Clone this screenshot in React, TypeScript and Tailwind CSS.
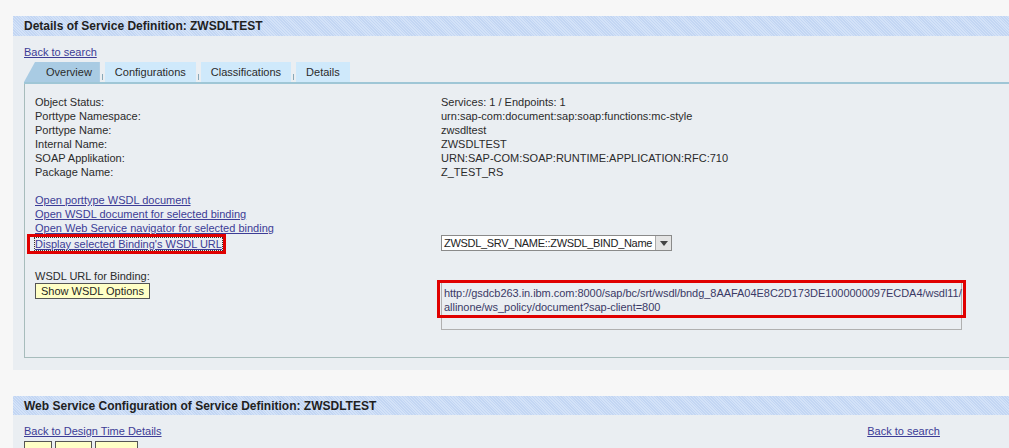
import React from "react";

const rows: [string, string][] = [
  ["Object Status:", "Services: 1 / Endpoints: 1"],
  ["Porttype Namespace:", "urn:sap-com:document:sap:soap:functions:mc-style"],
  ["Porttype Name:", "zwsdltest"],
  ["Internal Name:", "ZWSDLTEST"],
  ["SOAP Applikation:", "URN:SAP-COM:SOAP:RUNTIME:APPLICATION:RFC:710"],
  ["Package Name:", "Z_TEST_RS"],
];

const links = [
  "Open porttype WSDL document",
  "Open WSDL document for selected binding",
  "Open Web Service navigator for selected binding",
];

const hatch =
  "bg-[#cbdcf6] bg-[repeating-linear-gradient(45deg,#c3d6f3_0px,#c3d6f3_1px,#d3e2f8_1px,#d3e2f8_2px)]";

const Tab = ({ label, active, first }: { label: string; active?: boolean; first?: boolean }) => (
  <div className="flex items-end h-[20px]">
    {!first && <div className="w-[1px] h-[6px] bg-[#8aa8b8] mx-[2px] mb-[2px]" />}
    <div
      className={
        active
          ? "h-[20px] pl-[22px] pr-[8px] flex items-center bg-[#a9cbe3] [clip-path:polygon(11px_0,100%_0,100%_100%,0_100%)]"
          : "h-[20px] px-[10px] flex items-center bg-[#cfe9fb]"
      }
    >
      {label}
    </div>
  </div>
);

export default function App() {
  return (
    <div className="w-[1009px] h-[448px] overflow-hidden bg-[#f7f7f7] pt-[16px] pl-[13px] font-['Liberation_Sans',Arial,sans-serif] text-[11px] text-[#2b2b2b] leading-[14px]">
      {/* first panel */}
      <div className="bg-[#eaeef2]">
        <div className={`h-[20px] flex items-center pl-[11px] font-bold text-[12px] text-[#1f1f1f] ${hatch}`}>
          Details of Service Definition: ZWSDLTEST
        </div>
        <div className="pl-[11px] pb-[12px]">
          <div className="pt-[9px] h-[26px]">
            <a className="underline text-[#3c3c96]">Back to search</a>
          </div>
          <div className="flex items-end border-b-2 border-[#9fc6d6]">
            <Tab label="Overview" active first />
            <Tab label="Configurations" />
            <Tab label="Classifications" />
            <Tab label="Details" />
          </div>
          <div className="border-l border-b border-[#a7bcbc] h-[274px] pl-[10px] pt-[11px]">
            {rows.map(([k, v]) => (
              <div key={k} className="flex">
                <div className="w-[406px]">{k}</div>
                <div>{v}</div>
              </div>
            ))}
            <div className="mt-[14px] flex flex-col">
              {links.map((l) => (
                <a key={l} className="underline text-[#3c3c96] w-fit">
                  {l}
                </a>
              ))}
            </div>
            <div className="flex items-start -mt-[1px]">
              <div className="w-[406px]">
                <div className="-ml-[8px] w-[199px] h-[20px] border-[3px] border-[#e00000] flex items-center pl-[5px]">
                  <a className="underline text-[#3c3c96] whitespace-nowrap outline outline-1 outline-dotted outline-[#333] leading-[12px]">
                    Display selected Binding's WSDL URL
                  </a>
                </div>
              </div>
              <div className="mt-[1px] flex items-center h-[16px] border border-[#8a8a8a] bg-white">
                <div className="pl-[2px] pr-[3px] text-[#222] tracking-[-0.3px] whitespace-nowrap">
                  ZWSDL_SRV_NAME::ZWSDL_BIND_Name
                </div>
                <div className="w-[16px] h-[14px] bg-[#e4e4e4] border-l border-[#aaa] flex items-center justify-center">
                  <svg width="8" height="5" viewBox="0 0 8 5">
                    <path d="M0 0h8L4 5z" fill="#444" />
                  </svg>
                </div>
              </div>
            </div>
            <div className="flex mt-[15px]">
              <div className="w-[406px]">
                <div>WSDL URL for Binding:</div>
                <div className="w-fit h-[16px] px-[5px] flex items-center bg-[#ffffc6] border border-[#555] text-[#1f1f1f]">
                  Show WSDL Options
                </div>
              </div>
              <div className="relative mt-[11px] w-[521px] h-[50px] border border-[#b0b0b0]">
                <div className="absolute -left-[5px] -top-[1px] w-[529px] h-[38px] border-[3px] border-[#e00000] pl-[4px] pt-[3px] text-[#3a3a66] whitespace-nowrap tracking-[-0.04px]">
                  http://gsdcb263.in.ibm.com:8000/sap/bc/srt/wsdl/bndg_8AAFA04E8C2D173DE1000000097ECDA4/wsdl11/
                  <br />
                  allinone/ws_policy/document?sap-client=800
                </div>
              </div>
            </div>
          </div>
        </div>
      </div>

      {/* second panel */}
      <div className="bg-[#eaeef2] mt-[26px]">
        <div className={`h-[19px] flex items-center pl-[11px] font-bold text-[12px] text-[#1f1f1f] ${hatch}`}>
          Web Service Configuration of Service Definition: ZWSDLTEST
        </div>
        <div className="pl-[11px] pt-[9px] flex w-[975px]">
          <a className="underline text-[#3c3c96]">Back to Design Time Details</a>
          <div className="flex-1" />
          <a className="underline text-[#3c3c96] mr-[48px]">Back to search</a>
        </div>
        <div className="pl-[11px] pt-[3px] flex gap-[3px]">
          <div className="w-[28px] h-[16px] bg-[#ffffc6] border border-[#555]" />
          <div className="w-[37px] h-[16px] bg-[#ffffc6] border border-[#555]" />
          <div className="w-[43px] h-[16px] bg-[#ffffc6] border border-[#555]" />
        </div>
      </div>
    </div>
  );
}
